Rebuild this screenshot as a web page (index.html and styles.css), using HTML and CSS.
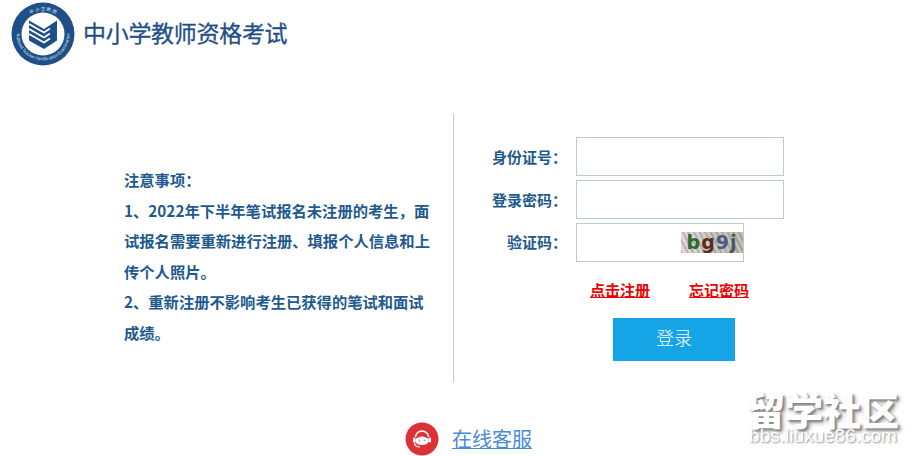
FILE: index.html
```html
<!DOCTYPE html>
<html lang="zh-CN">
<head>
<meta charset="utf-8">
<title>中小学教师资格考试</title>
<link rel="stylesheet" href="styles.css">
</head>
<body>
<div class="page">
  <header class="header">
    <svg class="logo" viewBox="0 0 64 64" width="64" height="64" aria-hidden="true">
      <defs>
        <path id="ringTop" d="M8.500 32a23.500 23.500 0 0 1 47 0"/>
        <path id="ringBottom" d="M5.500 32a26.500 26.500 0 0 0 53 0"/>
      </defs>
      <circle cx="32" cy="32" r="31.500" fill="#1f4f88"/>
      <circle cx="32" cy="32" r="21.500" fill="#fff"/>
      <text class="ring-cn"><textPath href="#ringTop" startOffset="50%" text-anchor="middle">中 小 学 教 师</textPath></text>
      <text class="ring-en"><textPath href="#ringBottom" startOffset="50%" text-anchor="middle">National Teacher Certification Examination</textPath></text>
      <path d="M33 27l13-8.500v20l-13 8.500z" fill="#1f4f88"/>
      <path d="M18 18.500l15 8.500v20l-15-8.500z" fill="#1f4f88"/>
      <path d="M18 22l15 8.500l6-4M18 27l15 8.500l6-4M18 32l15 8.500l6-4" stroke="#fff" stroke-width="1.800" fill="none"/>
    </svg>
    <h1 class="title">中小学教师资格考试</h1>
  </header>

  <main class="main">
    <section class="notice">
      <p>注意事项：</p>
      <p>1、2022年下半年笔试报名未注册的考生，面试报名需要重新进行注册、填报个人信息和上传个人照片。</p>
      <p>2、重新注册不影响考生已获得的笔试和面试成绩。</p>
    </section>

    <form class="login">
      <div class="row">
        <label class="label">身份证号：</label>
        <input class="field" type="text">
      </div>
      <div class="row">
        <label class="label">登录密码：</label>
        <input class="field" type="password">
      </div>
      <div class="row">
        <label class="label label-code">验证码：</label>
        <div class="field field-code">
          <span class="captcha"><i class="c1">b</i><i class="c2">g</i><i class="c3">9</i><i class="c4">j</i></span>
        </div>
      </div>
      <div class="links">
        <a class="link" href="#">点击注册</a>
        <a class="link" href="#">忘记密码</a>
      </div>
      <button class="submit" type="button">登录</button>
    </form>
  </main>

  <footer class="service">
    <svg class="service-icon" viewBox="0 0 34 34" width="34" height="34" aria-hidden="true">
      <circle cx="17" cy="17" r="16.500" fill="#dc3237"/>
      <path d="M10.500 15a6.500 6 0 0 1 13 0" fill="none" stroke="#fff" stroke-width="1.600"/>
      <path d="M10.500 19.500a3.500 3.500 0 0 1 3-4q3.500-2 7 0a3.500 3.500 0 0 1 3 4q-1 3.500-6.500 3.500t-6.500-3.500z" fill="#fff"/>
      <rect x="8" y="15.500" width="2.600" height="5" rx="1.300" fill="#fff"/>
      <rect x="23.400" y="15.500" width="2.600" height="5" rx="1.300" fill="#fff"/>
      <circle cx="14.500" cy="18.500" r="1" fill="#b9a5a8"/>
      <circle cx="19.500" cy="18.500" r="1" fill="#b9a5a8"/>
      <path d="M9.500 20.500c0 3 2.500 4.500 5.500 4.500" fill="none" stroke="#fff" stroke-width="1.200"/>
    </svg>
    <a class="service-link" href="#">在线客服</a>
  </footer>

  <div class="watermark">
    <div class="wm-title">留学社区</div>
    <div class="wm-url">bbs.liuxue86.com</div>
  </div>
</div>
</body>
</html>
```

FILE: styles.css
```css
* { box-sizing: border-box; }

html, body {
  margin: 0;
  height: 456px;
  overflow: hidden;
  background: #fff;
}

body {
  font-family: "Noto Sans CJK SC", "Liberation Sans", sans-serif;
}

.page {
  position: relative;
  width: 914px;
  height: 456px;
  overflow: hidden;
}

.header {
  display: flex;
  align-items: center;
  height: 68px;
  padding: 0 0 0 11px;
}

.logo { flex: none; }

.ring-cn { font-size: 4.500px; fill: #dfe8f2; }
.ring-en { font-size: 4.200px; fill: #dfe8f2; }

.title {
  margin: 0 0 4px 8px;
  font-size: 23px;
  line-height: 30px;
  font-weight: 400;
  color: #1f4f85;
  letter-spacing: -0.300px;
  -webkit-text-stroke: 0.300px #1f4f85;
}

.main {
  display: flex;
  margin: 45px 0 0 124px;
  height: 270px;
}

.notice {
  width: 330px;
  padding: 51px 18px 0 0;
  border-right: 1px solid #c8c8c8;
  color: #1f5a8e;
  font-size: 15.300px;
  line-height: 30.500px;
  font-weight: 700;
}

.notice p { margin: 0; }

.login {
  display: flex;
  flex-direction: column;
  padding: 24px 0 0 0;
}

.row {
  display: flex;
  align-items: center;
  margin-bottom: 4px;
}

.label {
  width: 113px;
  margin-right: 9px;
  text-align: right;
  color: #1f5a8e;
  font-size: 15px;
  font-weight: 700;
}

.label-code {
  position: relative;
  top: -1px;
}

.field {
  display: block;
  width: 208px;
  height: 39px;
  border: 1px solid #bccbd8;
  background: #fff;
  outline: none;
  padding: 0;
}

.field-code {
  display: flex;
  align-items: center;
  justify-content: flex-end;
  width: 168px;
}

.captcha {
  display: block;
  width: 62px;
  height: 21px;
  background:
    repeating-linear-gradient(63deg, rgba(120,110,95,.28) 0 2px, rgba(255,255,255,.15) 2px 5px),
    linear-gradient(90deg, #e0d2e2, #c5c1b8 45%, #b9b5a8);
  font: 700 19px/21px "DejaVu Sans", sans-serif;
  text-align: center;
  letter-spacing: 1px;
  white-space: nowrap;
}

.captcha i { font-style: normal; }
.c1 { color: #2d6a2c; }
.c2 { color: #5c2a24; }
.c3 { color: #4a5a85; }
.c4 { color: #4b5560; }

.links {
  display: flex;
  gap: 39px;
  margin: 12px 0 0 136px;
  line-height: 24px;
}

.link {
  color: #f00000;
  font-size: 15px;
  font-weight: 700;
  text-decoration: underline;
}

.submit {
  display: block;
  width: 122px;
  height: 43px;
  margin: 16px 0 0 159px;
  border: 0;
  padding: 0 0 6px;
  background: #15a4e5;
  color: #fff;
  font-family: inherit;
  font-size: 18px;
  font-weight: 300;
}

.service {
  display: flex;
  align-items: center;
  gap: 13px;
  margin: 39px 0 0 405px;
}

.service-icon { flex: none; }

.service-link {
  color: #4a8ad4;
  font-size: 20px;
  line-height: 28px;
  text-decoration: underline;
  text-decoration-thickness: 1px;
}

.watermark {
  position: absolute;
  left: 744px;
  top: 389px;
  width: 158px;
  text-align: center;
  color: #fff;
  text-shadow: 2px 2px 2px #888, 3px 3px 4px #aaa;
}

.wm-title {
  font-size: 38px;
  line-height: 40px;
  font-weight: 900;
  white-space: nowrap;
}

.wm-url {
  font-family: "Liberation Sans", sans-serif;
  font-size: 19px;
  line-height: 14px;
  white-space: nowrap;
  text-shadow: 1px 1px 2px #888;
}
```
